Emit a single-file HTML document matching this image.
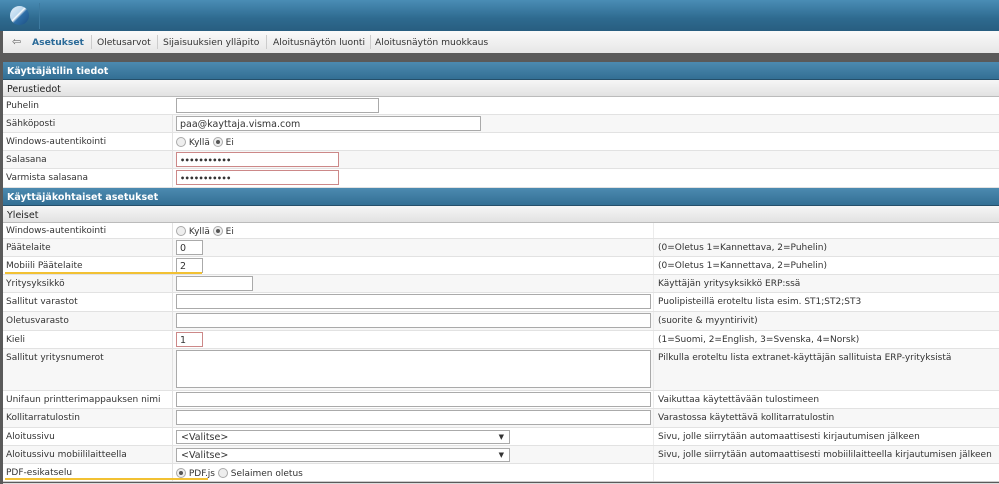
<!DOCTYPE html><html><head><meta charset="utf-8"><style>
*{box-sizing:border-box;margin:0;padding:0}
body{width:999px;height:484px;overflow:hidden;background:#5a5a5a;font-family:"DejaVu Sans","Liberation Sans",sans-serif;font-size:9px;color:#333;position:relative}
.a{position:absolute}
#hdr{left:0;top:0;width:999px;height:31px;background:linear-gradient(#4a8db5,#2e6a8f 60%,#285e80)}
#nav{left:3px;top:31px;width:996px;height:22px;background:linear-gradient(#fafafa,#e6e6e6);font-size:9.2px;color:#333}
#nav span{position:absolute;top:6px}
.sep{position:absolute;top:4px;width:1px;height:14px;background:#ccc}
.sec{left:3px;width:996px;height:18px;background:linear-gradient(#4c8ab0,#336f94);color:#fff;font-weight:bold;padding:4px 4px;font-size:9.5px;border-bottom:1px solid #254f6a}
.sub{left:3px;width:996px;height:17px;background:linear-gradient(#f6f6f6,#e2e2e2);color:#222;padding:4px 4px;border-bottom:1px solid #bbb;font-size:9.5px}
.row{left:3px;width:996px;border-bottom:1px solid #e2e2e2}
.row .l{position:absolute;left:3px;top:4px}
.row .c1{position:absolute;left:169px;top:0;bottom:0;width:1px;background:#e2e2e2}
.row .c2{position:absolute;left:650px;top:0;bottom:0;width:1px;background:#ececec}
.row .h{position:absolute;left:655px;top:4px}
.in{position:absolute;height:15px;border:1px solid #aaa;background:#fff;padding:2px 3px;top:1px;font-size:9.5px}
.red{border-color:#c88}
.pw{font-size:8px;font-weight:bold;letter-spacing:-0.5px;padding-top:3px}
.rad{position:absolute;top:4px;left:173px}
.rb{display:inline-block;width:10px;height:10px;border:1px solid #aaa;border-radius:50%;background:#eee;vertical-align:-2px;position:relative}
.rb.on::after{content:"";position:absolute;left:2px;top:2px;width:4px;height:4px;border-radius:50%;background:#555}
.sel{position:absolute;left:173px;top:2px;width:334px;height:14px;border:1px solid #aaa;background:#fff;padding:1px 4px;font-size:9.5px}
.sel::after{content:"▼";position:absolute;right:5px;top:2px;font-size:7px}
.ul{position:absolute;height:2px;background:#f2c133}
</style></head><body>
<div class="a" id="hdr">
<div class="a" style="left:10px;top:6px;width:19px;height:19px;border-radius:50%;background:linear-gradient(135deg,#e8f2fa 0,#bcd8ee 40%,#fff 45%,#2e6fa8 55%,#1c4f82);"></div>
<div class="a" style="left:39px;top:3px;width:1px;height:26px;background:#3d7aa0"></div>
</div>
<div class="a" id="nav">
<span style="left:9px;top:4px;font-size:11px;color:#666">⇦</span>
<span style="left:29px;color:#2a6a98;font-weight:bold">Asetukset</span>
<div class="sep" style="left:88px"></div>
<span style="left:94px">Oletusarvot</span>
<div class="sep" style="left:154px"></div>
<span style="left:160px">Sijaisuuksien ylläpito</span>
<div class="sep" style="left:263px"></div>
<span style="left:270px">Aloitusnäytön luonti</span>
<div class="sep" style="left:367px"></div>
<span style="left:372px">Aloitusnäytön muokkaus</span>
</div>
<div class="a sec" style="top:62px">Käyttäjätilin tiedot</div>
<div class="a sub" style="top:80px">Perustiedot</div>

<div class="a row" style="top:97px;height:18px;background:#fff"><div class="l">Puhelin</div><div class="in" style="left:173px;width:203px"></div></div>
<div class="a row" style="top:115px;height:18px;background:#f7f7f7"><div class="l">Sähköposti</div><div class="c1"></div><div class="in" style="left:173px;width:305px">paa@kayttaja.visma.com</div></div>
<div class="a row" style="top:133px;height:18px;background:#fff"><div class="l">Windows-autentikointi</div><div class="c1"></div><div class="rad"><span class="rb"></span> Kyllä <span class="rb on"></span> Ei</div></div>
<div class="a row" style="top:151px;height:18px;background:#f7f7f7"><div class="l">Salasana</div><div class="c1"></div><div class="in red pw" style="left:173px;width:163px">•••••••••••</div></div>
<div class="a row" style="top:169px;height:19px;background:#fff"><div class="l">Varmista salasana</div><div class="c1"></div><div class="in red pw" style="left:173px;width:163px">•••••••••••</div></div>

<div class="a sec" style="top:188px">Käyttäjäkohtaiset asetukset</div>
<div class="a sub" style="top:206px">Yleiset</div>

<div class="a row" style="top:223px;height:16px;background:#fff"><div class="l" style="top:3px">Windows-autentikointi</div><div class="c1"></div><div class="c2"></div><div class="rad" style="top:3px"><span class="rb"></span> Kyllä <span class="rb on"></span> Ei</div></div>
<div class="a row" style="top:239px;height:18px;background:#f7f7f7"><div class="l">Päätelaite</div><div class="c1"></div><div class="c2"></div><div class="in" style="left:173px;width:27px">0</div><div class="h">(0=Oletus 1=Kannettava, 2=Puhelin)</div></div>
<div class="a row" style="top:257px;height:18px;background:#fff"><div class="l">Mobiili Päätelaite</div><div class="c1"></div><div class="c2"></div><div class="in" style="left:173px;width:27px">2</div><div class="h">(0=Oletus 1=Kannettava, 2=Puhelin)</div></div>
<div class="a row" style="top:275px;height:18px;background:#f7f7f7"><div class="l">Yritysyksikkö</div><div class="c1"></div><div class="c2"></div><div class="in" style="left:173px;width:77px"></div><div class="h">Käyttäjän yritysyksikkö ERP:ssä</div></div>
<div class="a row" style="top:293px;height:19px;background:#fff"><div class="l">Sallitut varastot</div><div class="c1"></div><div class="c2"></div><div class="in" style="left:173px;width:475px"></div><div class="h">Puolipisteillä eroteltu lista esim. ST1;ST2;ST3</div></div>
<div class="a row" style="top:312px;height:19px;background:#f7f7f7"><div class="l">Oletusvarasto</div><div class="c1"></div><div class="c2"></div><div class="in" style="left:173px;width:475px"></div><div class="h">(suorite &amp; myyntirivit)</div></div>
<div class="a row" style="top:331px;height:18px;background:#fff"><div class="l">Kieli</div><div class="c1"></div><div class="c2"></div><div class="in red" style="left:173px;width:27px">1</div><div class="h">(1=Suomi, 2=English, 3=Svenska, 4=Norsk)</div></div>
<div class="a row" style="top:349px;height:42px;background:#f7f7f7"><div class="l">Sallitut yritysnumerot</div><div class="c1"></div><div class="c2"></div><div class="in" style="left:173px;width:475px;height:38px"></div><div class="h">Pilkulla eroteltu lista extranet-käyttäjän sallituista ERP-yrityksistä</div></div>
<div class="a row" style="top:391px;height:18px;background:#fff"><div class="l">Unifaun printterimappauksen nimi</div><div class="c1"></div><div class="c2"></div><div class="in" style="left:173px;width:475px"></div><div class="h">Vaikuttaa käytettävään tulostimeen</div></div>
<div class="a row" style="top:409px;height:19px;background:#f7f7f7"><div class="l">Kollitarratulostin</div><div class="c1"></div><div class="c2"></div><div class="in" style="left:173px;width:475px"></div><div class="h">Varastossa käytettävä kollitarratulostin</div></div>
<div class="a row" style="top:428px;height:18px;background:#fff"><div class="l">Aloitussivu</div><div class="c1"></div><div class="c2"></div><div class="sel">&lt;Valitse&gt;</div><div class="h">Sivu, jolle siirrytään automaattisesti kirjautumisen jälkeen</div></div>
<div class="a row" style="top:446px;height:18px;background:#f7f7f7"><div class="l">Aloitussivu mobiililaitteella</div><div class="c1"></div><div class="c2"></div><div class="sel">&lt;Valitse&gt;</div><div class="h">Sivu, jolle siirrytään automaattisesti mobiililaitteella kirjautumisen jälkeen</div></div>
<div class="a row" style="top:464px;height:18px;background:#fff;border-bottom:1px solid #ccc"><div class="l">PDF-esikatselu</div><div class="c1"></div><div class="c2"></div><div class="rad" style="left:173px"><span class="rb on"></span> PDF.js <span class="rb"></span> Selaimen oletus</div></div>
<div class="a" style="left:3px;top:483px;width:996px;height:1px;background:#ddd"></div>

<div class="ul" style="left:5px;top:272px;width:197px"></div>
<div class="ul" style="left:5px;top:478px;width:203px"></div>
</body></html>
